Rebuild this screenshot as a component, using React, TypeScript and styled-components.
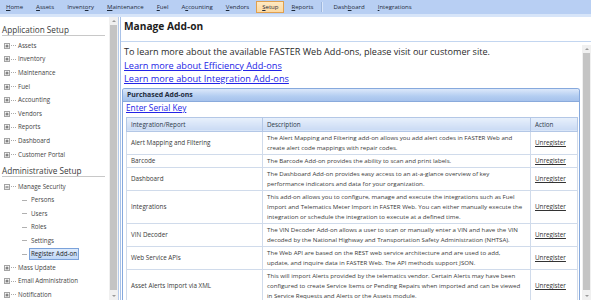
import React from 'react';
import styled, { createGlobalStyle } from 'styled-components';

const GlobalStyle = createGlobalStyle`
  html, body { margin: 0; padding: 0; background: #fff; overflow: hidden; }
  body { font-family: "Open Sans", "Noto Sans", sans-serif; color: #333; }
  * { box-sizing: border-box; }
`;

const Page = styled.div`
  width: 591px;
  height: 300px;
  display: flex;
  flex-direction: column;
  overflow: hidden;
`;

const NavBar = styled.div`
  flex: none;
  height: 17px;
  display: flex;
  align-items: flex-start;
  gap: 1px;
  padding-left: 0;
  background: #b8cff3;
  border-bottom: 3px solid #d7e5f9;
`;

const NavItem = styled.div<{ $active?: boolean }>`
  margin-top: 1px;
  height: 12px;
  padding: 0 5px;
  font-size: 6.05px;
  line-height: 10px;
  color: #1e2a3a;
  white-space: nowrap;
  border: 1px solid ${p => (p.$active ? '#e0a050' : 'transparent')};
  background: ${p => (p.$active ? 'linear-gradient(#fee9c3, #fdd9a0)' : 'transparent')};
`;

const NavSep = styled.div`
  margin: 2px 3px 0 1px;
  width: 2px;
  height: 10px;
  border-left: 1px solid #9db6dd;
  border-right: 1px solid #d9e6f9;
`;

const Body = styled.div`
  flex: 1;
  min-height: 0;
  display: flex;
`;

const Sidebar = styled.div`
  width: 109px;
  flex: none;
  padding-left: 2px;
  overflow: hidden;
`;

const SectionTitle = styled.div<{ $top: number }>`
  margin-top: ${p => p.$top}px;
  margin-right: 4px;
  font-size: 8.2px;
  line-height: 11px;
  color: #3a3a3a;
  border-bottom: 1px solid #c8c8c8;
  white-space: nowrap;
`;

const TreeList = styled.div`
  margin-top: 3px;
  display: flex;
  flex-direction: column;
`;

const TreeRow = styled.div<{ $child?: boolean; $h?: number }>`
  height: ${p => p.$h ?? 13.5}px;
  display: flex;
  align-items: center;
  padding-left: ${p => (p.$child ? 20 : 2)}px;
  font-size: 6.2px;
  color: #444;
  white-space: nowrap;
`;

const Dots = styled.div`
  width: 5px;
  border-top: 1px dotted #aaa;
`;

const Branch = styled.div`
  width: 5px;
  border-top: 1px solid #b0b0b0;
`;

const TreeLabel = styled.span<{ $selected?: boolean; $child?: boolean }>`
  margin-left: ${p => (p.$child ? 2 : 0)}px;
  padding: 0 1px;
  height: 12px;
  line-height: 10px;
  border: 1px solid ${p => (p.$selected ? '#7ba2da' : 'transparent')};
  background: ${p => (p.$selected ? 'linear-gradient(#deebfc, #c0d7f6)' : 'transparent')};
  color: ${p => (p.$selected ? '#1e1e1e' : '#444')};
`;

const ScrollTrack = styled.div<{ $top?: number }>`
  width: 9px;
  flex: none;
  margin-top: ${p => p.$top ?? 0}px;
  background: #f0f0f0;
  display: flex;
  flex-direction: column;
  align-items: center;
`;

const ScrollArrow = styled.div<{ $down?: boolean }>`
  height: 8px;
  width: 9px;
  display: flex;
  align-items: center;
  justify-content: center;
  &::after {
    content: '';
    border-left: 2px solid transparent;
    border-right: 2px solid transparent;
    ${p => (p.$down ? 'border-top: 2px solid #9a9a9a;' : 'border-bottom: 2px solid #9a9a9a;')}
  }
`;

const ScrollThumb = styled.div`
  flex: 1;
  width: 7px;
  margin: 0 0 2px;
  background: #c4c4c4;
`;

const Splitter = styled.div`
  width: 2px;
  flex: none;
  border-left: 1px solid #b6cbea;
`;

const Main = styled.div`
  flex: 1;
  min-width: 0;
  display: flex;
  flex-direction: column;
  border-left: 1px solid #a9c2e8;
`;

const TitleBar = styled.div`
  flex: none;
  height: 25px;
  padding: 3px 0 0 3px;
  font-size: 10.2px;
  line-height: 13px;
  font-weight: 700;
  color: #1c1c1c;
  border-bottom: 1px solid #c3d6f0;
`;

const ContentRow = styled.div`
  flex: 1;
  min-height: 0;
  display: flex;
`;

const Content = styled.div`
  flex: 1;
  min-width: 0;
  padding: 3px 0 0 3px;
  overflow: hidden;
`;

const Para = styled.div`
  font-size: 9.1px;
  line-height: 13.6px;
  color: #2a2a2a;
  white-space: nowrap;
`;

const Link = styled.a`
  display: block;
  font-size: 9.2px;
  line-height: 13.6px;
  color: #2323e6;
  text-decoration: underline;
  white-space: nowrap;
`;

const Panel = styled.div`
  margin: 2px 2px 0 -2px;
  border: 1px solid #86a9dd;
  border-radius: 3px 3px 0 0;
  border-bottom: none;
  background: #fff;
`;

const PanelHeader = styled.div`
  height: 13px;
  padding-left: 4px;
  font-size: 6.9px;
  line-height: 12px;
  font-weight: 700;
  color: #1e2b3c;
  background: linear-gradient(#dce8fa, #b3cdf1 60%, #a6c2ec);
  border-bottom: 1px solid #8aaadb;
  border-radius: 2px 2px 0 0;
`;

const PanelLink = styled.a`
  display: block;
  margin-left: 3px;
  font-size: 8.3px;
  line-height: 12px;
  color: #2323e6;
  text-decoration: underline;
`;

const Table = styled.table`
  margin: 3px 2px 0 3px;
  width: 451px;
  border-collapse: collapse;
  table-layout: fixed;
  border: 1px solid #a3bbe2;
  font-size: 6.3px;
  color: #3a3a3a;
`;

const Th = styled.th<{ $w: number }>`
  width: ${p => p.$w}px;
  height: 14.4px;
  padding: 0 4px;
  text-align: left;
  font-weight: 400;
  color: #2e3a4a;
  background: linear-gradient(#e9f1fc, #c9daf4);
  border: 1px solid #b3c7e6;
`;

const Td = styled.td`
  padding: 1px 4px;
  line-height: 10px;
  vertical-align: middle;
  border: 1px solid #d0dbeb;
  white-space: nowrap;
  overflow: hidden;
`;

const DescLine = styled.div`
  font-size: 6.15px;
  white-space: nowrap;
`;

const Action = styled.a`
  color: #333;
  text-decoration: underline;
`;

const Expander = ({ open }: { open?: boolean }) => (
  <svg width="6" height="6" viewBox="0 0 6 6" style={{ flex: 'none', marginRight: 1 }}>
    <defs>
      <linearGradient id="eg" x1="0" y1="0" x2="0" y2="1">
        <stop offset="0" stopColor="#ffffff" />
        <stop offset="1" stopColor="#dedede" />
      </linearGradient>
    </defs>
    <rect x="0.5" y="0.5" width="5" height="5" fill="url(#eg)" stroke="#a4a4a4" />
    <path d="M1.5 3h3" stroke="#555" strokeWidth="0.9" />
    {!open && <path d="M3 1.5v3" stroke="#555" strokeWidth="0.9" />}
  </svg>
);

const K = ({ c }: { c: string }) => <u>{c}</u>;

const navItems: { node: React.ReactNode; active?: boolean; sepBefore?: boolean }[] = [
  { node: <><K c="H" />ome</> },
  { node: <><K c="A" />ssets</> },
  { node: <>Invent<K c="o" />ry</> },
  { node: <><K c="M" />aintenance</> },
  { node: <><K c="F" />uel</> },
  { node: <>A<K c="c" />counting</> },
  { node: <><K c="V" />endors</> },
  { node: <><K c="S" />etup</>, active: true },
  { node: <><K c="R" />eports</> },
  { node: <>Dash<K c="b" />oard</>, sepBefore: true },
  { node: <><K c="I" />ntegrations</> },
];

const appSetup = ['Assets', 'Inventory', 'Maintenance', 'Fuel', 'Accounting', 'Vendors', 'Reports', 'Dashboard', 'Customer Portal'];
const securityChildren = ['Persons', 'Users', 'Roles', 'Settings', 'Register Add-on'];
const adminAfter = ['Mass Update', 'Email Administration', 'Notification'];

const rows: { name: string; desc: string[] }[] = [
  {
    name: 'Alert Mapping and Filtering',
    desc: [
      'The Alert Mapping and Filtering add-on allows you add alert codes in FASTER Web and',
      'create alert code mappings with repair codes.',
    ],
  },
  { name: 'Barcode', desc: ['The Barcode Add-on provides the ability to scan and print labels.'] },
  {
    name: 'Dashboard',
    desc: [
      'The Dashboard Add-on provides easy access to an at-a-glance overview of key',
      'performance indicators and data for your organization.',
    ],
  },
  {
    name: 'Integrations',
    desc: [
      'This add-on allows you to configure, manage and execute the integrations such as Fuel',
      'Import and Telematics Meter Import in FASTER Web. You can either manually execute the',
      'integration or schedule the integration to execute at a defined time.',
    ],
  },
  {
    name: 'VIN Decoder',
    desc: [
      'The VIN Decoder Add-on allows a user to scan or manually enter a VIN and have the VIN',
      'decoded by the National Highway and Transportation Safety Administration (NHTSA).',
    ],
  },
  {
    name: 'Web Service APIs',
    desc: [
      'The Web API are based on the REST web service architecture and are used to add,',
      'update, and inquire data in FASTER Web. The API methods support JSON.',
    ],
  },
  {
    name: 'Asset Alerts Import via XML',
    desc: [
      'This will import Alerts provided by the telematics vendor. Certain Alerts may have been',
      'configured to create Service Items or Pending Repairs when imported and can be viewed',
      'in Service Requests and Alerts or the Assets module.',
    ],
  },
  {
    name: 'Fuel Import via XML',
    desc: [
      'This will import fuel transactions provided by the fuel vendor into FASTER Web and',
      'update the asset meter readings.',
    ],
  },
];

export default function App() {
  return (
    <>
      <GlobalStyle />
      <Page>
        <NavBar>
          {navItems.map((n, i) => (
            <React.Fragment key={i}>
              {n.sepBefore && <NavSep />}
              <NavItem $active={n.active}>{n.node}</NavItem>
            </React.Fragment>
          ))}
        </NavBar>
        <Body>
          <Sidebar>
            <SectionTitle $top={7}>Application Setup</SectionTitle>
            <TreeList>
              {appSetup.map(s => (
                <TreeRow key={s} $h={13.6}>
                  <Expander />
                  <Dots />
                  <TreeLabel>{s}</TreeLabel>
                </TreeRow>
              ))}
            </TreeList>
            <SectionTitle $top={3.5}>Administrative Setup</SectionTitle>
            <TreeList>
              <TreeRow>
                <Expander open />
                <Dots />
                <TreeLabel>Manage Security</TreeLabel>
              </TreeRow>
              {securityChildren.map(s => (
                <TreeRow key={s} $child>
                  <Branch />
                  <TreeLabel $child $selected={s === 'Register Add-on'}>{s}</TreeLabel>
                </TreeRow>
              ))}
              {adminAfter.map(s => (
                <TreeRow key={s}>
                  <Expander />
                  <Dots />
                  <TreeLabel>{s}</TreeLabel>
                </TreeRow>
              ))}
            </TreeList>
          </Sidebar>
          <ScrollTrack>
            <ScrollArrow />
            <ScrollThumb />
            <ScrollArrow $down />
          </ScrollTrack>
          <Splitter />
          <Main>
            <TitleBar>Manage Add-on</TitleBar>
            <ContentRow>
              <Content>
                <Para>To learn more about the available FASTER Web Add-ons, please visit our customer site.</Para>
                <Link href="#">Learn more about Efficiency Add-ons</Link>
                <Link href="#">Learn more about Integration Add-ons</Link>
                <Panel>
                  <PanelHeader>Purchased Add-ons</PanelHeader>
                  <PanelLink href="#">Enter Serial Key</PanelLink>
                  <Table>
                    <thead>
                      <tr>
                        <Th $w={136}>Integration/Report</Th>
                        <Th $w={268}>Description</Th>
                        <Th $w={47}>Action</Th>
                      </tr>
                    </thead>
                    <tbody>
                      {rows.map(r => (
                        <tr key={r.name}>
                          <Td>{r.name}</Td>
                          <Td>
                            {r.desc.map((d, i) => (
                              <DescLine key={i}>{d}</DescLine>
                            ))}
                          </Td>
                          <Td>
                            <Action href="#">Unregister</Action>
                          </Td>
                        </tr>
                      ))}
                    </tbody>
                  </Table>
                </Panel>
              </Content>
              <ScrollTrack $top={3}>
                <ScrollArrow />
                <ScrollThumb />
                <ScrollArrow $down />
              </ScrollTrack>
            </ContentRow>
          </Main>
        </Body>
      </Page>
    </>
  );
}
